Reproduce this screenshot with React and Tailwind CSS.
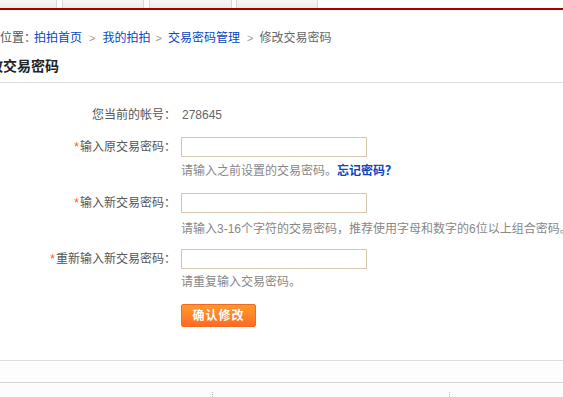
export default function App() {
  const font = { fontFamily: '"Liberation Sans", Arial, "Noto Sans CJK SC", sans-serif' };
  const Star = () => <span className="text-[#ff5a00] mr-[1px]">*</span>;
  return (
    <div className="w-[563px] h-[397px] overflow-hidden bg-white text-[12px] text-[#555] relative" style={font}>
      {/* top tabs */}
      <div className="flex h-[8px]">
        <div className="w-[57px] h-full bg-gradient-to-b from-[#f7f7f7] to-[#ededed] border-r border-[#d8d8d8]" />
        <div className="ml-[5px] w-[82px] h-full bg-gradient-to-b from-[#f7f7f7] to-[#ededed] border-x border-[#d8d8d8]" />
        <div className="ml-[5px] w-[83px] h-full bg-gradient-to-b from-[#f7f7f7] to-[#ededed] border-x border-[#d8d8d8]" />
        <div className="ml-[4px] w-[82px] h-full bg-gradient-to-b from-[#f7f7f7] to-[#ededed] border-x border-[#d8d8d8]" />
      </div>
      <div className="h-[2px] bg-[#a80000]" />

      {/* breadcrumb */}
      <div className="mt-[18px] h-[20px] leading-[20px] flex items-center whitespace-nowrap">
        <span className="text-[#555]">位置：</span>
        <span className="ml-[-2px] text-[#0a45c2]">拍拍首页</span>
        <span className="ml-[7px] mr-[7px] text-[#a89a88] text-[11px]">&gt;</span>
        <span className="text-[#0a45c2]">我的拍拍</span>
        <span className="ml-[5px] mr-[6px] text-[#a89a88] text-[11px]">&gt;</span>
        <span className="text-[#0a45c2]">交易密码管理</span>
        <span className="ml-[7px] mr-[6px] text-[#a89a88] text-[11px]">&gt;</span>
        <span className="text-[#666]">修改交易密码</span>
      </div>

      {/* title */}
      <div className="mt-[6px] pb-[4px] border-b border-[#dddddd]">
        <div className="ml-[-25px] leading-[24px] text-[14px] font-bold text-[#222] whitespace-nowrap">修改交易密码</div>
      </div>

      {/* form */}
      <div className="mt-[22px] flex h-[20px] leading-[20px] whitespace-nowrap">
        <div className="w-[176px] text-right text-[#555]">您当前的帐号：</div>
        <div className="ml-[6px] text-[#666]">278645</div>
      </div>

      <div className="mt-[12px] flex h-[20px] leading-[20px] whitespace-nowrap">
        <div className="w-[176px] text-right text-[#555]"><Star />输入原交易密码：</div>
        <div className="ml-[5px] w-[186px] h-[20px] border border-[#d4c6ad] bg-white" />
      </div>
      <div className="mt-[4px] ml-[181px] h-[20px] leading-[20px] whitespace-nowrap text-[#888]">
        请输入之前设置的交易密码。<span className="text-[#0a45c2] font-bold">忘记密码？</span>
      </div>

      <div className="mt-[12px] flex h-[20px] leading-[20px] whitespace-nowrap">
        <div className="w-[176px] text-right text-[#555]"><Star />输入新交易密码：</div>
        <div className="ml-[5px] w-[186px] h-[20px] border border-[#d4c6ad] bg-white" />
      </div>
      <div className="mt-[6px] ml-[181px] h-[20px] leading-[20px] whitespace-nowrap text-[#888]">
        请输入3-16个字符的交易密码，推荐使用字母和数字的6位以上组合密码。
      </div>

      <div className="mt-[10px] flex h-[20px] leading-[20px] whitespace-nowrap">
        <div className="w-[176px] text-right text-[#555]"><Star />重新输入新交易密码：</div>
        <div className="ml-[5px] w-[186px] h-[20px] border border-[#d4c6ad] bg-white" />
      </div>
      <div className="mt-[3px] ml-[181px] h-[20px] leading-[20px] whitespace-nowrap text-[#888]">
        请重复输入交易密码。
      </div>

      <div className="mt-[12px] ml-[181px]">
        <div className="w-[75px] h-[23px] rounded-[2px] border border-[#f26a24] bg-gradient-to-b from-[#ff9a2c] to-[#ff6a24] text-white font-bold text-[12px] flex items-center justify-center tracking-[1px]">
          确认修改
        </div>
      </div>

      {/* bottom */}
      <div className="mt-[33px] border-t border-[#dddddd] h-[22px] bg-[#fdfdfd]" />
      <div className="border-t border-[#d3d3d3] h-[15px] bg-[#fcfcfc] flex items-end">
        <div className="ml-[212px] h-[5px] border-l border-dotted border-[#bbb]" />
        <div className="ml-[236px] h-[5px] border-l border-dotted border-[#bbb]" />
      </div>
    </div>
  );
}
